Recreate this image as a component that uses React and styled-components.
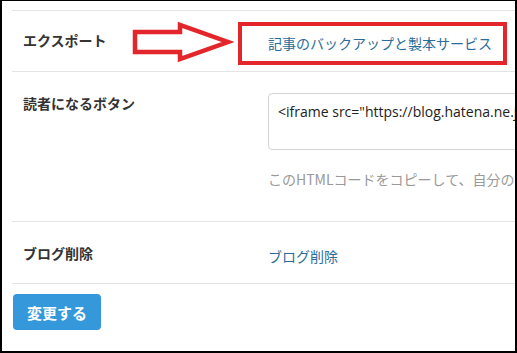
import { createGlobalStyle, styled } from "styled-components";

const GlobalStyle = createGlobalStyle`
    body {
        margin: 0;
        background: #fff;
        font-family: "Noto Sans CJK JP", "Noto Sans", sans-serif;
        color: #333;
    }
`

const Frame = styled.div`
    position: relative;
    box-sizing: border-box;
    width: 517px;
    height: 353px;
    border-style: solid;
    border-color: #000;
    border-width: 1px 2px 2px 2px;
    overflow: hidden;
    background: #fff;
`

const Content = styled.div`
    padding: 9px 0 0 10px;
`

const Table = styled.div`
    border-bottom: 1px solid #e4e4e4;
`

const Row = styled.div`
    display: grid;
    grid-template-columns: 245px 1fr;
    border-top: 1px solid #e4e4e4;
    padding: ${({$pad}) => $pad} 0 0 11px;
    min-height: ${({$h}) => $h}px;
    box-sizing: border-box;
`

const Label = styled.div`
    font-size: 14px;
    font-weight: 700;
    line-height: 20px;
    color: #333;
`

const Value = styled.div`
    min-width: 0;
    white-space: nowrap;
`

const Link = styled.a`
    font-size: 14px;
    line-height: 20px;
    color: #2b6c9b;
    text-decoration: none;
    cursor: pointer;
`

const Code = styled.div`
    box-sizing: border-box;
    width: 400px;
    height: 57px;
    border: 1px solid #d4d4d4;
    border-radius: 4px;
    padding: 8px 9px;
    font-family: "Open Sans", "Noto Sans", sans-serif;
    font-size: 14px;
    line-height: 20px;
    color: #222;
    overflow: hidden;
`

const Help = styled.p`
    margin: 19px 0 0;
    font-size: 14px;
    line-height: 20px;
    color: #999;
`

const Submit = styled.button`
    margin: 10px 0 0 1px;
    width: 88px;
    height: 36px;
    border: none;
    border-radius: 4px;
    background: #3498db;
    color: #fff;
    font-family: inherit;
    font-size: 15px;
    font-weight: 700;
    cursor: pointer;
`

const Arrow = styled.svg`
    position: absolute;
    left: 128px;
    top: 19px;
`

const Highlight = styled.div`
    position: absolute;
    left: 236px;
    top: 21px;
    width: 269px;
    height: 43px;
    box-sizing: border-box;
    border: 4px solid #e3262b;
`

const App = () => {
    return (
        <Frame>
            <GlobalStyle/>
            <Content>
                <Table>
                    <Row $pad="19px" $h={61}>
                        <Label>エクスポート</Label>
                        <Value><Link>記事のバックアップと製本サービス</Link></Value>
                    </Row>
                    <Row $pad="21px" $h={150}>
                        <Label>読者になるボタン</Label>
                        <Value>
                            <Code>&lt;iframe src="https://blog.hatena.ne.jp/-/subscribe/iframe"</Code>
                            <Help>このHTMLコードをコピーして、自分のブログに貼り付けてください。</Help>
                        </Value>
                    </Row>
                    <Row $pad="21px" $h={62}>
                        <Label>ブログ削除</Label>
                        <Value><Link>ブログ削除</Link></Value>
                    </Row>
                </Table>
                <Submit>変更する</Submit>
            </Content>
            <Arrow width="104" height="44" viewBox="0 0 104 44">
                <path d="M5 12 H50 V5 L98 22 L50 39 V32 H5 Z" fill="none" stroke="#e3262b" strokeWidth="4.5" strokeLinejoin="miter"/>
            </Arrow>
            <Highlight/>
        </Frame>
    );
};

export default App;
